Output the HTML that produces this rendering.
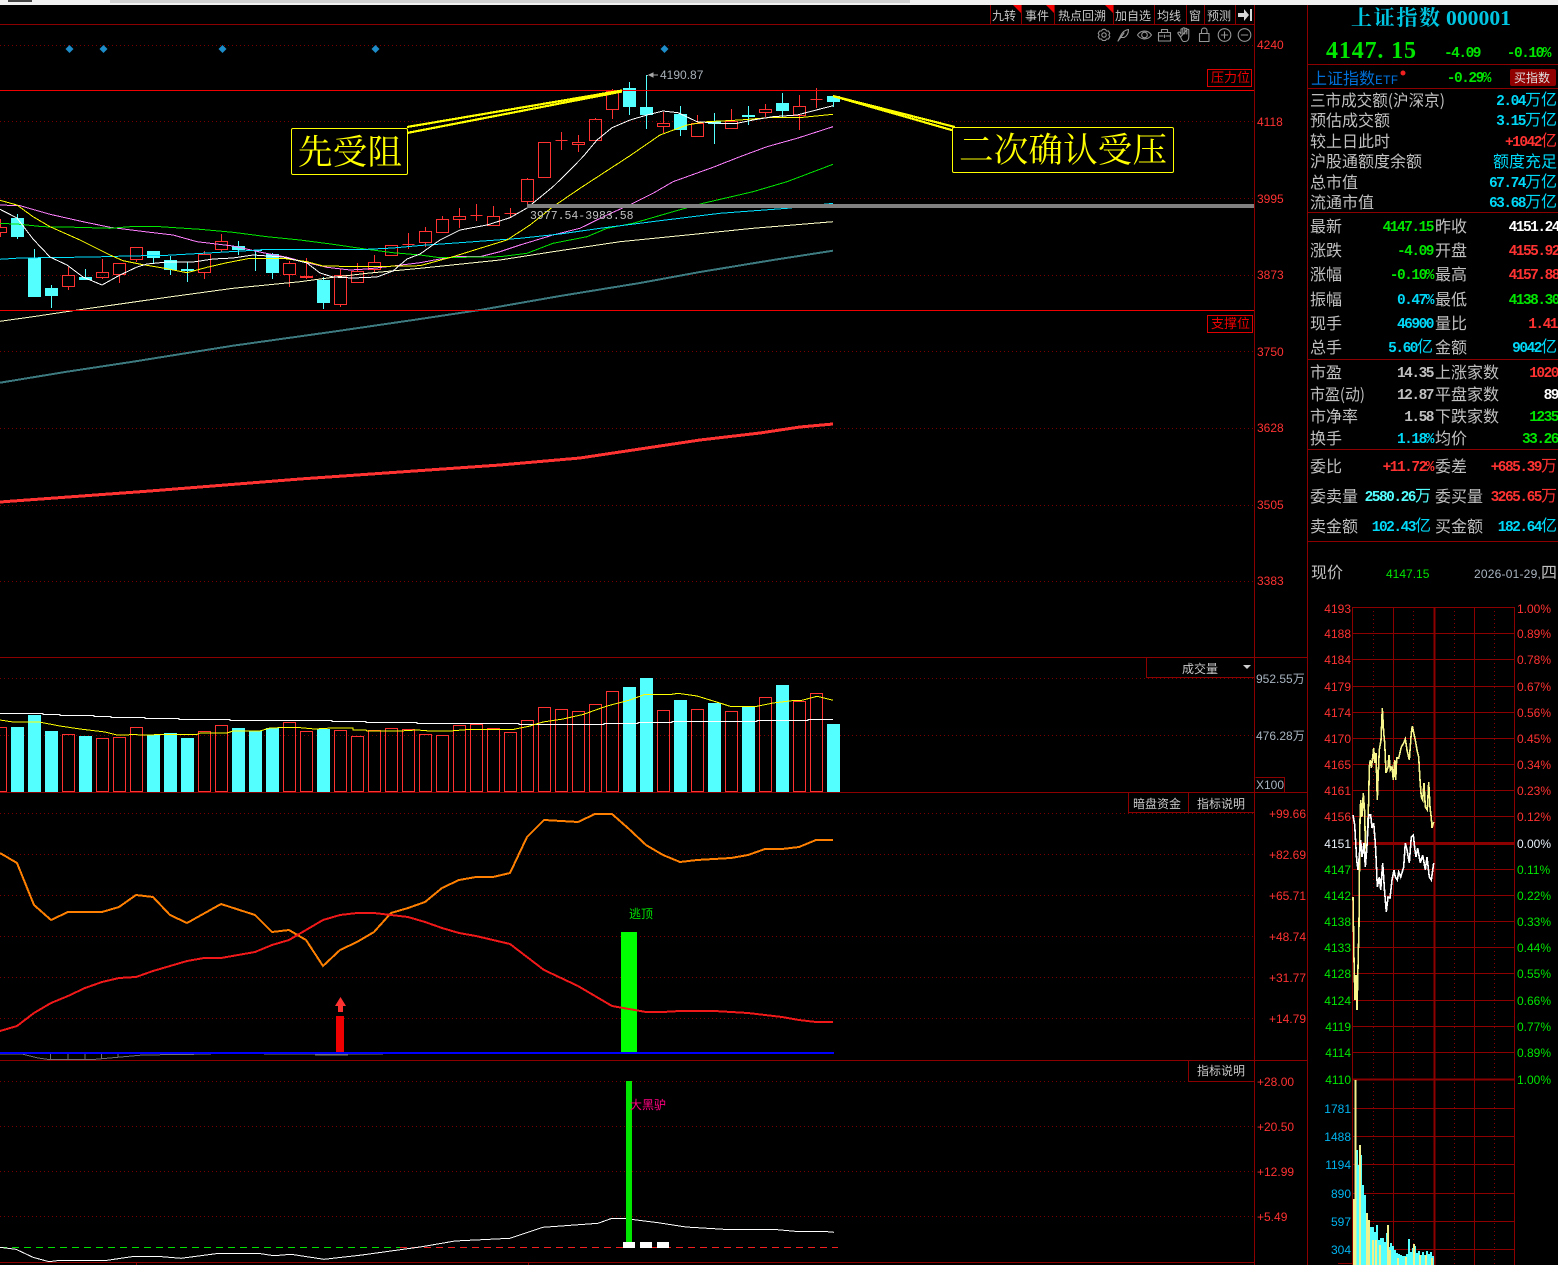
<!DOCTYPE html>
<html lang="zh-CN"><head><meta charset="utf-8"><title>上证指数 000001</title>
<style>
html,body{margin:0;padding:0;background:#000;width:1558px;height:1265px;overflow:hidden}
svg{display:block;position:absolute;left:0;top:0}
text{white-space:pre}
polyline{shape-rendering:crispEdges}
.cj{font-family:"WenQuanYi Zen Hei","Noto Sans CJK SC",sans-serif;font-size:16px;font-weight:400;letter-spacing:0}
.cs{font-family:"WenQuanYi Zen Hei","Noto Sans CJK SC",sans-serif;font-size:12px}
.l{font-family:"WenQuanYi Zen Hei","Noto Sans CJK SC",sans-serif;font-size:16px;fill:#c0c0c0}
.v{font-family:"Liberation Mono","WenQuanYi Zen Hei",monospace;font-weight:700;font-size:14.5px;letter-spacing:-1.5px;text-anchor:end}
.a{font-family:"Liberation Sans",sans-serif;font-size:12px}
.r{fill:#ff3232}.g{fill:#00e600}.c{fill:#00d8f8}.w{fill:#fff}.s{fill:#c0c0c0}.k{fill:#54ffff}
.e{text-anchor:end}
</style></head><body>
<svg width="1558" height="1265" viewBox="0 0 1558 1265" xmlns="http://www.w3.org/2000/svg">
<rect width="1558" height="1265" fill="#000"/>
<rect width="1558" height="5" fill="#f0f0f0"/><rect x="110" width="800" height="3" fill="#d0d0d0"/><rect x="8" width="24" height="2" fill="#444"/>

<!-- dotted grids -->
<g stroke="#7a0000" stroke-dasharray="1 3" fill="none" shape-rendering="crispEdges">
<path d="M0 45.5H1254M0 121.5H1254M0 198.5H1254M0 275.5H1254M0 351.5H1254M0 428.5H1254M0 505.5H1254M0 581.5H1254M0 678.5H1254M0 735.5H1254M0 813.5H1254M0 854.5H1254M0 895.5H1254M0 936.5H1254M0 977.5H1254M0 1018.5H1254M0 1081.5H1254M0 1126.5H1254M0 1171.5H1254M0 1216.5H1254"/>
</g>
<!-- frame -->
<g stroke="#8c0000" fill="none" shape-rendering="crispEdges">
<path d="M0 24.5H1254M0 657.5H1307M0 792.5H1307M0 1060.5H1307M0 1262.5H1254M1254.5 5V1265M1307.5 5V1265M136.5 1262V1265M528.5 1262V1265"/>
<path d="M990.5 5V24M1021.5 5V24M1054.5 5V24M1113.5 5V24M1154.5 5V24M1186.5 5V24M1204.5 5V24M1235.5 5V24"/>
<path d="M1146.5 657V677.5H1254M1128.5 792V812.5H1254M1188.5 792V812.5M1188.5 1060V1081.5H1254M1255.5 777.5H1284.5V792"/>
<path d="M1307 64.5H1558M1307 88.5H1558M1307 212.5H1558M1307 359.5H1558M1307 449.5H1558M1307 541.5H1558"/>
</g>
<path d="M1013 5H1021V13ZM1046 5H1054V13ZM1105 5H1113V13Z" fill="#f00000"/>
<g fill="#c8c8c8" class="cs">
<text x="992" y="20">九转</text><text x="1025" y="20">事件</text><text x="1058" y="20">热点回溯</text><text x="1115" y="20">加自选</text><text x="1157" y="20">均线</text><text x="1189" y="20">窗</text><text x="1207" y="20">预测</text>
<text x="1182" y="673">成交量</text><text x="1133" y="808">暗盘资金</text><text x="1197" y="808">指标说明</text><text x="1197" y="1075">指标说明</text>
</g>
<path d="M1238 13H1244V9L1249 15L1244 21V17H1238ZM1250 9H1252V21H1250Z" fill="#d8d8d8"/>
<path d="M1243 665H1251L1247 669Z" fill="#d0d0d0"/>

<!-- toolbar icons -->
<g fill="none" stroke="#969696" stroke-width="1.1" stroke-linejoin="round" stroke-linecap="round">
<path d="M1102.500 29.500L1104 29.200L1105.500 29.500L1106.500 31L1108.500 31L1109.800 33.500L1108.800 35L1109.800 36.500L1108.500 39L1106.500 39L1105.500 40.500H1102.500L1101.500 39L1099.500 39L1098.200 36.500L1099.200 35L1098.200 33.500L1099.500 31L1101.500 31Z"/><circle cx="1104" cy="35" r="2.200"/>
<path d="M1118 41L1121 35C1122.500 32 1125 30 1128.500 29.500C1128.500 33 1127 36 1124 37.500L1120.500 37.500M1118 41L1124 33"/>
<path d="M1137.500 35C1141 29.800 1148 29.800 1151.500 35C1148 40.200 1141 40.200 1137.500 35Z"/><circle cx="1144.500" cy="35" r="2.800"/>
<path d="M1158.500 32.500H1170.500V41H1158.500ZM1161.500 32.500V29.500H1167.500V32.500M1158.500 36H1163M1166 36H1170.500M1164.500 35V37.500"/>
<path d="M1180.500 37L1178 33.500C1177.500 32.500 1179 31.500 1180 32.500L1181 34V29.500C1181 28.500 1182.800 28.500 1182.800 29.500V28.500C1182.800 27.500 1184.800 27.500 1184.800 28.500V34M1184.800 29C1184.800 28 1186.800 28 1186.800 29V34M1186.800 30C1186.800 29 1188.800 29 1188.800 30V37C1188.800 39.500 1187.500 41.500 1185 41.500H1183.500C1182 41.500 1181.500 39 1180.500 37ZM1182.800 29V34"/>
<path d="M1199.500 33.500H1209V41.500H1199.500ZM1201.500 33.500V30.500C1201.500 27.200 1207 27.200 1207 30.500V33.500"/>
<circle cx="1224.500" cy="35" r="6.300"/><path d="M1221.300 35H1227.700M1224.500 31.800V38.200"/>
<circle cx="1244.500" cy="35" r="6.300"/><path d="M1241.300 35H1247.700"/>
</g>

<!-- diamonds -->
<path d="M69.500 45L73.500 49L69.500 53L65.500 49ZM103.500 45L107.500 49L103.500 53L99.500 49ZM222.500 45L226.500 49L222.500 53L218.500 49ZM375.500 45L379.500 49L375.500 53L371.500 49ZM664.500 45L668.500 49L664.500 53L660.500 49Z" fill="#1e8cc8"/>

<!-- cyan candles -->
<g shape-rendering="crispEdges">
<path fill="none" stroke="#54ffff" d="M17.500 214V239M34.500 249V297M51.500 285V308M85.500 269V280M153.500 251V263M170.500 256V275M187.500 262V282M238.500 241V255M255.500 250V271M272.500 253V279M323.500 277V309M629.500 82V115M646.500 75V129M680.500 106V136M714.500 113V144M748.500 106V125M782.500 93V117M833.500 95V107"/>
<path fill="#54ffff" d="M11 218h13v19H11ZM28 258h13v39H28ZM45 288h13v8H45ZM79 277h13v3H79ZM147 251h13v7H147ZM164 260h13v10H164ZM181 269h13v2H181ZM232 246h13v4H232ZM249 250h13v1H249ZM266 254h13v19H266ZM317 280h13v23H317ZM623 88h13v19H623ZM640 107h13v8H640ZM674 114h13v16H674ZM708 121h13v3H708ZM742 115h13v2H742ZM776 103h13v8H776ZM827 96h13v6H827Z"/>
<!-- red candles -->
<path fill="none" stroke="#ff3232" d="
M.5 219V227M.5 233V237M-5.500 227.500H6.500V232.500H-5.500Z
M68.500 267V275M68.500 287V290M62.500 275.500H74.500V286.500H62.500Z
M102.500 259V272M102.500 278V279M96.500 272.500H108.500V277.500H96.500Z
M119.500 275V283M113.500 263.500H125.500V274.500H113.500Z
M136.500 260V262M130.500 247.500H142.500V259.500H130.500Z
M204.500 251V254M204.500 273V279M198.500 254.500H210.500V272.500H198.500Z
M221.500 234V241M221.500 250V252M215.500 241.500H227.500V249.500H215.500Z
M289.500 261V263M289.500 275V287M283.500 263.500H295.500V274.500H283.500Z
M306.500 258V276M306.500 278V279M300.500 276.500H312.500V277.500H300.500Z
M340.500 269V275M340.500 305V307M334.500 275.500H346.500V304.500H334.500Z
M357.500 263V271M351.500 271.500H363.500V282.500H351.500Z
M374.500 255V262M374.500 270V273M368.500 262.500H380.500V269.500H368.500Z
M391.500 245V245M385.500 245.500H397.500V255.500H385.500Z
M408.500 233V249M402.500 244.500H414.500
M425.500 227V231M425.500 243V247M419.500 231.500H431.500V242.500H419.500Z
M442.500 216V219M436.500 219.500H448.500V232.500H436.500Z
M459.500 208V216M459.500 220V228M453.500 216.500H465.500V219.500H453.500Z
M476.500 204V221M470.500 215.500H482.500
M493.500 206V216M487.500 216.500H499.500V225.500H487.500Z
M510.500 208V217M504.500 213.500H516.500
M527.500 178V179M527.500 202V208M521.500 179.500H533.500V201.500H521.500Z
M538.500 142.500H550.500V177.500H538.500Z
M561.500 132V150M555.500 140.500H567.500
M578.500 135V142M578.500 145V152M572.500 142.500H584.500V144.500H572.500Z
M595.500 118V119M589.500 119.500H601.500V140.500H589.500Z
M612.500 89V91M612.500 110V119M606.500 91.500H618.500V109.500H606.500Z
M663.500 112V123M663.500 127V133M657.500 123.500H669.500V126.500H657.500Z
M697.500 115V123M691.500 123.500H703.500V136.500H691.500Z
M731.500 109V121M725.500 121.500H737.500V128.500H725.500Z
M765.500 104V109M765.500 113V117M759.500 109.500H771.500V112.500H759.500Z
M799.500 95V106M799.500 116V130M793.500 106.500H805.500V115.500H793.500Z
M816.500 88V108M810.500 99.500H822.500"/>
</g>

<!-- MAs -->
<g fill="none" stroke-width="1">
<polyline stroke="#ff80ff" points="0,205 20,205.700 50,214.300 83,221.700 110,227.300 150,232.300 173,235 197,241.700 233,246 263,252.700 287,257.300 307,262.700 327,267.300 350,270 367,269 393,266 420,262.700 440,259 457,256.700 480,256.700 500,251.700 520,245 553,235 580,228.300 607,215 633,203.300 653,193.300 673,181.700 713,167.300 740,156.700 767,146.700 797,138.300 833,126.700"/>
<polyline stroke="#00e600" points="0,223.300 20,224.300 43,226.700 77,227.300 110,228.300 130,226.700 160,226.700 200,229.300 233,232.300 267,236.700 300,240 333,244.300 367,249.300 393,252.700 420,255 440,257.700 500,256.700 527,253.300 553,243.300 587,236.700 607,228.300 633,223.300 673,211.700 703,203.300 753,191.700 787,181.700 833,164.300"/>
<polyline stroke="#00e0ff" points="0,259.300 20,258 93,257 127,256 167,255.300 213,252.700 247,250.700 267,249.300 367,249.300 393,248 420,245.500 460,242.700 520,238.300 560,234 600,228.300 660,220.700 720,213.300 787,208.300 833,203.300"/>
<polyline stroke="#ffffc8" points="0,321.300 33,316.700 73,310.700 113,305 167,297.300 233,288.300 300,281.700 333,277.300 367,273.300 420,268.300 500,260 553,251.700 620,241.700 687,235 753,228.300 833,221.700"/>
<polyline stroke="#ffff00" points="0,200.300 17,205 33,216.700 50,226.700 80,240 110,255 123,260.700 143,264.700 163,268 187,272.700 207,267.300 227,262.700 250,258.300 283,258.300 307,261.700 323,266 367,266.700 420,265.700 453,256.700 480,248.300 507,240 530,225 553,206.700 580,188.300 603,173.300 630,155.700 660,135 687,125 707,121.700 740,120 773,117.300 803,117.300 833,114.300"/>
<polyline stroke="#fff" points="0,209.300 17,218 33,239 50,257 67,265 83,277 102,285 120,275 137,267 147,264 167,262 193,262 213,259 233,258 253,255 283,257 307,263 320,273 333,277 353,278 377,277 393,271 407,259 420,254 440,240 460,230 487,225 510,217.700 527,208 553,186.700 567,173 583,156.700 597,140 612,127.700 630,120 647,115 663,111 678,112.700 697,121.700 720,123.300 737,123.300 753,120 773,116.700 797,115 833,105.700"/>
<polyline stroke="#3c7a80" stroke-width="2" points="0,382.700 67,371.700 133,361.700 233,345.700 333,331.700 420,319 480,310 560,296 640,283 700,272 773,260 833,250.700"/>
<polyline stroke="#ff3232" stroke-width="3" points="0,502 150,491 300,479 400,472 500,465 580,458 640,449 700,440 760,433 800,427 833,424"/>
</g>

<rect x="527" y="204" width="727" height="4" fill="#808080"/>
<path d="M0 90.500H1254M0 310.500H1254" stroke="#f00000" fill="none" shape-rendering="crispEdges"/>

<!-- annotation lines -->
<g stroke="#ffff00" stroke-width="2.200" fill="none" shape-rendering="crispEdges">
<path d="M407 127L622 90.500M407 133L622 91.500M833 96L955 127M833 96L955 131"/>
</g>
<rect x="291.500" y="128.500" width="116" height="46" rx="1.500" fill="#000" stroke="#ffff00"/>
<rect x="952.500" y="127.500" width="221" height="45" rx="1.500" fill="#000" stroke="#ffff00"/>
<g fill="#ffff00" font-family="'Noto Serif CJK SC',serif" font-size="34.500px">
<text x="298" y="164" textLength="104" lengthAdjust="spacing">先受阻</text>
<text x="959" y="162" textLength="208" lengthAdjust="spacing">二次确认受压</text>
</g>

<path d="M649 75H658M649 75L653 73V77Z M647.500 75V76" stroke="#a8a8a8" fill="#a8a8a8" />
<text class="a" x="660" y="79" fill="#a8b0b8">4190.87</text>
<text x="530" y="219" fill="#c0c0c0" font-family="'Liberation Mono',monospace" font-size="11.500px">3977.54-3983.58</text>

<rect x="1207.500" y="69.500" width="44" height="17" fill="none" stroke="#e00000"/>
<rect x="1207.500" y="315.500" width="45" height="17" fill="none" stroke="#e00000"/>
<g class="cs" fill="#f00000" font-size="13"><text x="1211" y="82" font-size="13">压力位</text><text x="1211" y="328" font-size="13">支撑位</text></g>

<!-- axis main -->
<g class="a r">
<text x="1257" y="49">4240</text><text x="1257" y="126">4118</text><text x="1257" y="203">3995</text><text x="1257" y="279">3873</text><text x="1257" y="356">3750</text><text x="1257" y="432">3628</text><text x="1257" y="509">3505</text><text x="1257" y="585">3383</text>
</g>
<g class="a" fill="#a8b4c0"><text x="1256" y="683">952.55<tspan class="cs">万</tspan></text><text x="1256" y="740">476.28<tspan class="cs">万</tspan></text><text x="1256" y="789">X100</text></g>
<g class="a r e">
<text x="1306" y="818">+99.66</text><text x="1306" y="859">+82.69</text><text x="1306" y="900">+65.71</text><text x="1306" y="941">+48.74</text><text x="1306" y="982">+31.77</text><text x="1306" y="1023">+14.79</text>
</g>
<g class="a r">
<text x="1257" y="1086">+28.00</text><text x="1257" y="1131">+20.50</text><text x="1257" y="1176">+12.99</text><text x="1257" y="1221">+5.49</text>
</g>

<!-- volume -->
<g shape-rendering="crispEdges">
<path fill="#54ffff" d="M11 727h13V792H11ZM28 715h13V792H28ZM45 731h13V792H45ZM79 736h13V792H79ZM147 735h13V792H147ZM164 733h13V792H164ZM181 738h13V792H181ZM232 728h13V792H232ZM249 731h13V792H249ZM266 728h13V792H266ZM317 729h13V792H317ZM623 687h13V792H623ZM640 678h13V792H640ZM674 700h13V792H674ZM708 703h13V792H708ZM742 706h13V792H742ZM776 685h13V792H776ZM827 724h13V792H827Z"/>
<path fill="none" stroke="#ff3232" d="M-5.500 727.500h12V791.500h-12ZM62.500 734.500h12V791.500h-12ZM96.500 738.500h12V791.500h-12ZM113.500 737.500h12V791.500h-12ZM130.500 727.500h12V791.500h-12ZM198.500 731.500h12V791.500h-12ZM215.500 725.500h12V791.500h-12ZM283.500 722.500h12V791.500h-12ZM300.500 731.500h12V791.500h-12ZM334.500 730.500h12V791.500h-12ZM351.500 736.500h12V791.500h-12ZM368.500 730.500h12V791.500h-12ZM385.500 728.500h12V791.500h-12ZM402.500 729.500h12V791.500h-12ZM419.500 734.500h12V791.500h-12ZM436.500 735.500h12V791.500h-12ZM453.500 725.500h12V791.500h-12ZM470.500 724.500h12V791.500h-12ZM487.500 728.500h12V791.500h-12ZM504.500 732.500h12V791.500h-12ZM521.500 720.500h12V791.500h-12ZM538.500 707.500h12V791.500h-12ZM555.500 709.500h12V791.500h-12ZM572.500 711.500h12V791.500h-12ZM589.500 704.500h12V791.500h-12ZM606.500 691.500h12V791.500h-12ZM657.500 710.500h12V791.500h-12ZM691.500 709.500h12V791.500h-12ZM725.500 711.500h12V791.500h-12ZM759.500 697.500h12V791.500h-12ZM793.500 701.500h12V791.500h-12ZM810.500 693.500h12V791.500h-12Z"/>
<path fill="none" stroke="#fff" d="M0 713.500H43V714.500H60V715.500H94V716.500H111V717.500H145V718.500H179V719.500H230V720.500H332V721.500H366V722.500H417V723.500H519V724.500H604V723.500H638V722.500H672V721.500H757V720.500H808V719.500H833"/>
</g>
<polyline fill="none" stroke="#ffff00" points="0,720 13,722 39,722 60,726 80,729 105,732 117,735 128,735 130,734.500 145,735 163,734.500 197,734.500 200,733 227,733 233,731 260,731 270,728 285,727.500 298,727.500 315,729 332,728 353,728 353,730 366,730 367,731 400,731 417,730 430,731 450,731 468,729.500 513,729.500 530,726 543,722 563,719 583,714.500 607,706 630,700 645,694.300 672,694.300 678,693.300 697,696 723,704 730,706.300 757,706.300 773,703 792,700.700 802,700.300 817,696.300 833,700.300"/>

<!-- indicator 1 -->
<polyline fill="none" stroke="#ff8000" stroke-width="2" points="0,853 17,863 34,905 51,920 68,912 102,912 119,907 136,895 153,897 170,915 187,923 221,904 255,915 272,932 289,930 306,940 323,966 340,950 357,942 374,932 391,913 408,908 425,902 442,888 459,880 476,877 493,877 510,873 527,837 544,820 561,821 578,822 595,814 612,814 629,829 646,845 663,855 680,862 697,860 714,859 731,858 748,855 765,849 782,849 799,847 816,840 833,840"/>
<rect x="621" y="932" width="16" height="120" fill="#00ff00"/>
<rect x="336" y="1016" width="8" height="36" fill="#f00000"/>
<path d="M340.500 997L346 1006H343V1012H338V1006H335Z" fill="#ff3232"/>
<polyline fill="none" stroke="#f01818" stroke-width="2" points="0,1031 17,1026 34,1013 51,1003 68,996 85,988 102,982 119,978 136,977 153,971 170,966 187,961 204,958 221,958 238,955 255,952 272,945 289,940 306,930 323,920 340,915 357,913 374,913 391,915 408,917 425,922 442,928 459,933 476,936 493,940 510,944 527,957 544,970 561,978 578,986 595,996 612,1006 629,1009 646,1012 663,1012 680,1011 697,1011 714,1011 731,1012 748,1013 765,1015 782,1017 799,1020 816,1022 833,1022"/>
<text class="cs" x="629" y="918" fill="#00e000">逃顶</text>
<path d="M0 1054H22L38 1058L49 1059.500H93L110 1058L143 1055L211 1054M264 1054H383M315 1055H348M50.500 1054V1059M68 1054V1059M85 1054V1059M101.500 1054V1059M118 1054V1057" stroke="#707070" fill="none" shape-rendering="crispEdges"/>
<rect x="0" y="1052" width="834" height="2" fill="#0000ff"/>

<!-- indicator 2 -->
<path d="M0 1247.500H400" stroke="#00e000" stroke-dasharray="7 5" fill="none" shape-rendering="crispEdges"/>
<path d="M400 1247.500H838" stroke="#f02020" stroke-dasharray="7 5" fill="none" shape-rendering="crispEdges"/>
<polyline fill="none" stroke="#fff" points="0,1247.300 16,1249.300 33,1257.300 49,1261.700 60,1260.300 107,1260.300 132,1256.700 162,1256.700 181,1258.300 219,1253.300 258,1253.300 274,1255.700 291,1254.300 324,1259.300 362,1255 422,1246.700 455,1241 510,1238.300 543,1227.300 598,1223.300 612,1218.300 623,1218.300 658,1222.700 686,1227 724,1229.300 773,1229.300 795,1231.300 823,1231.300 834,1232.300"/>
<rect x="626" y="1081" width="6" height="161" fill="#00e600"/>
<rect x="623" y="1242" width="12" height="6" fill="#fff"/><rect x="640" y="1242" width="12" height="6" fill="#fff"/><rect x="657" y="1242" width="12" height="6" fill="#fff"/>
<text class="cs" x="630" y="1109" fill="#ff0080" font-size="13">大黑驴</text>

<!-- right panel header -->
<text x="1351" y="25" fill="#00c4e0" font-family="'Noto Serif CJK SC',serif" font-weight="700" font-size="21px" textLength="89">上证指数</text>
<text x="1446" y="25" fill="#00c4e0" font-family="'Liberation Serif',serif" font-weight="700" font-size="21px" textLength="65" lengthAdjust="spacingAndGlyphs">000001</text>
<text x="1326" y="58" class="g" font-family="'Liberation Serif',serif" font-weight="700" font-size="24px" textLength="90">4147. 15</text>
<text class="v g" x="1480" y="57">-4.09</text><text class="v g" x="1550" y="57">-0.10%</text>
<text x="1311" y="84" class="l" style="fill:#0070d8">上证指数<tspan font-family="'Liberation Mono',monospace" font-size="13">ETF</tspan></text>
<circle cx="1403" cy="73" r="2.500" fill="#f02020"/>
<text class="v g" x="1490" y="82">-0.29%</text>
<rect x="1510" y="69" width="46" height="17" rx="2" fill="#900000"/>
<text class="cs" x="1514" y="82" fill="#e0e0e0" font-size="13">买指数</text>

<g>
<text class="l" x="1310" y="106" textLength="135" lengthAdjust="spacingAndGlyphs">三市成交额(沪深京)</text><text class="v c" x="1557" y="105">2.04<tspan class="cj">万亿</tspan></text>
<text class="l" x="1310" y="126">预估成交额</text><text class="v c" x="1557" y="125">3.15<tspan class="cj">万亿</tspan></text>
<text class="l" x="1310" y="147">较上日此时</text><text class="v r" x="1557" y="146">+1042<tspan class="cj">亿</tspan></text>
<text class="l" x="1310" y="167">沪股通额度余额</text><text class="cj c e" x="1557" y="167">额度充足</text>
<text class="l" x="1310" y="188">总市值</text><text class="v c" x="1557" y="187">67.74<tspan class="cj">万亿</tspan></text>
<text class="l" x="1310" y="208">流通市值</text><text class="v c" x="1557" y="207">63.68<tspan class="cj">万亿</tspan></text>

<text class="l" x="1310" y="232">最新</text><text class="v g" x="1433" y="231">4147.15</text><text class="l" x="1435" y="232">昨收</text><text class="v w" x="1559" y="231">4151.24</text>
<text class="l" x="1310" y="256">涨跌</text><text class="v g" x="1433" y="255">-4.09</text><text class="l" x="1435" y="256">开盘</text><text class="v r" x="1559" y="255">4155.92</text>
<text class="l" x="1310" y="280">涨幅</text><text class="v g" x="1433" y="279">-0.10%</text><text class="l" x="1435" y="280">最高</text><text class="v r" x="1559" y="279">4157.88</text>
<text class="l" x="1310" y="305">振幅</text><text class="v c" x="1433" y="304">0.47%</text><text class="l" x="1435" y="305">最低</text><text class="v g" x="1559" y="304">4138.30</text>
<text class="l" x="1310" y="329">现手</text><text class="v c" x="1433" y="328">46900</text><text class="l" x="1435" y="329">量比</text><text class="v r" x="1557" y="328">1.41</text>
<text class="l" x="1310" y="353">总手</text><text class="v c" x="1433" y="352">5.60<tspan class="cj">亿</tspan></text><text class="l" x="1435" y="353">金额</text><text class="v c" x="1557" y="352">9042<tspan class="cj">亿</tspan></text>

<text class="l" x="1310" y="378">市盈</text><text class="v s" x="1433" y="377">14.35</text><text class="l" x="1435" y="378">上涨家数</text><text class="v r" x="1558" y="377">1020</text>
<text class="l" x="1310" y="400" textLength="55" lengthAdjust="spacingAndGlyphs">市盈(动)</text><text class="v s" x="1433" y="399">12.87</text><text class="l" x="1435" y="400">平盘家数</text><text class="v w" x="1558" y="399">89</text>
<text class="l" x="1310" y="422">市净率</text><text class="v s" x="1433" y="421">1.58</text><text class="l" x="1435" y="422">下跌家数</text><text class="v g" x="1558" y="421">1235</text>
<text class="l" x="1310" y="444">换手</text><text class="v c" x="1433" y="443">1.18%</text><text class="l" x="1435" y="444">均价</text><text class="v g" x="1558" y="443">33.26</text>

<text class="l" x="1310" y="472">委比</text><text class="v r" x="1433" y="471">+11.72%</text><text class="l" x="1435" y="472">委差</text><text class="v r" x="1557" y="471">+685.39<tspan class="cj">万</tspan></text>
<text class="l" x="1310" y="502">委卖量</text><text class="v k" x="1431" y="501">2580.26<tspan class="cj">万</tspan></text><text class="l" x="1435" y="502">委买量</text><text class="v r" x="1557" y="501">3265.65<tspan class="cj">万</tspan></text>
<text class="l" x="1310" y="532">卖金额</text><text class="v c" x="1431" y="531">102.43<tspan class="cj">亿</tspan></text><text class="l" x="1435" y="532">买金额</text><text class="v c" x="1557" y="531">182.64<tspan class="cj">亿</tspan></text>

<text class="l" x="1311" y="578">现价</text><text class="a g" x="1386" y="578">4147.15</text><text class="a" x="1474" y="578" fill="#a8b4c0" textLength="83">2026-01-29,<tspan class="cj" fill="#c0c0c0">四</tspan></text>
</g>

<!-- intraday grid -->
<g stroke="#8c0000" fill="none" shape-rendering="crispEdges">
<path d="M1352 607.500H1515M1352 633.500H1515M1352 659.500H1515M1352 686.500H1515M1352 712.500H1515M1352 738.500H1515M1352 764.500H1515M1352 790.500H1515M1352 816.500H1515M1352 869.500H1515M1352 895.500H1515M1352 921.500H1515M1352 947.500H1515M1352 973.500H1515M1352 1000.500H1515M1352 1026.500H1515M1352 1052.500H1515M1352 1108.500H1515M1352 1136.500H1515M1352 1164.500H1515M1352 1193.500H1515M1352 1221.500H1515M1352 1249.500H1515"/>
<path d="M1352.500 607V1265M1393.500 607V1265M1474.500 607V1265M1514.500 607V1265M1338 1263.500H1352"/>
<path d="M1373.500 607V1265M1413.500 607V1265M1454.500 607V1265M1494.500 607V1265" stroke-dasharray="1 3"/>
<path d="M1352 843.500H1515" stroke-width="3"/>
<path d="M1352 1079.500H1515" stroke-width="2"/>
<path d="M1434.500 607V1265" stroke-width="2"/>
</g>

<!-- intraday volume -->
<g fill="none" stroke-width="2" shape-rendering="crispEdges">
<path stroke="#54ffff" d="M1357 1150V1265M1359 1165V1265M1361 1155V1265M1363 1185V1265M1365 1195V1265M1371 1227V1265M1373 1227V1265M1375 1232V1265M1377 1225V1265M1379 1240V1265M1381 1238V1265M1383 1238V1265M1385 1242V1265M1387 1233V1265M1389 1247V1265M1391 1243V1265M1393 1246V1265M1395 1250V1265M1397 1253V1265M1399 1254V1265M1401 1255V1265M1403 1256V1265M1405 1256V1265M1407 1254V1265M1409 1239V1265M1411 1252V1265M1413 1248V1265M1415 1246V1265M1417 1253V1265M1419 1251V1265M1421 1255V1265M1423 1252V1265M1425 1255V1265M1427 1251V1265M1429 1254V1265M1431 1252V1265M1433 1256V1265"/>
<path stroke="#f0f08c" d="M1354 1199V1265M1355.500 1080V1265M1360 1145V1265M1367 1213V1265M1369 1220V1265M1373 1240V1265M1376 1240V1265M1380 1245V1265M1388 1225V1265M1390 1250V1265M1398 1258V1265M1406 1257V1265M1414 1244V1265M1420 1255V1265M1426 1255V1265M1432 1258V1265"/>
</g>

<!-- intraday lines -->
<polyline fill="none" stroke="#f6f68c" stroke-width="1.600" points="1353,897 1354,960 1355,1000 1356,975 1357,1010 1358,967 1359,925 1359.300,886.700 1360,820 1360.700,800 1362,816.700 1363.300,793 1364.700,813 1365.300,843 1366.700,853 1367.700,827 1368.700,800 1369.300,767 1370.300,760 1371.300,768 1372.700,757 1373.700,748 1374.700,763 1376,753 1377.300,800 1378,780 1379.300,750 1381,740 1382.300,708 1383.700,733 1384.700,743 1386,773 1388,767 1389,755 1390.300,770 1392,767 1393.300,780 1394.700,760 1395.700,780 1396.700,758 1398.700,758 1401.300,747 1403.700,743 1405.300,739 1407,750 1409.300,760 1411.300,733 1412.300,726 1413.700,733 1415.300,740 1417,750 1418.700,757 1420,780 1421.300,797 1422.700,800 1424,783 1425.300,807 1427.300,810 1428.700,782 1430,807 1431.300,818 1432,828 1433.700,822"/>
<polyline fill="none" stroke="#fff" stroke-width="1.600" points="1353,815 1354.700,825 1356.700,860 1358,870 1360.700,840 1362,857 1364,843 1365.300,867 1366.700,850 1368.700,815 1370.700,815 1372,828 1373.700,823 1375.300,843 1376.300,863 1377.300,887 1379.300,877 1380.700,890 1382.700,863 1384.700,893 1386.300,912 1388,897 1390,898 1392,880 1394,870 1395.300,877 1397.300,880 1398.700,872 1400.700,877 1403.700,867 1405.300,843 1407,850 1409.300,863 1411.300,837 1413.300,835 1414.700,848 1416,857 1417.700,848 1420.300,863 1422.700,855 1425.300,870 1427,857 1429.300,877 1431.300,880 1433.700,863"/>

<!-- intraday labels -->
<g class="a e">
<g class="r"><text x="1351" y="613">4193</text><text x="1351" y="638">4188</text><text x="1351" y="664">4184</text><text x="1351" y="691">4179</text><text x="1351" y="717">4174</text><text x="1351" y="743">4170</text><text x="1351" y="769">4165</text><text x="1351" y="795">4161</text><text x="1351" y="821">4156</text></g>
<text x="1351" y="848" fill="#e8f0f8">4151</text>
<g class="g"><text x="1351" y="874">4147</text><text x="1351" y="900">4142</text><text x="1351" y="926">4138</text><text x="1351" y="952">4133</text><text x="1351" y="978">4128</text><text x="1351" y="1005">4124</text><text x="1351" y="1031">4119</text><text x="1351" y="1057">4114</text><text x="1351" y="1084">4110</text></g>
<g fill="#00b4f0"><text x="1351" y="1113">1781</text><text x="1351" y="1141">1488</text><text x="1351" y="1169">1194</text><text x="1351" y="1198">890</text><text x="1351" y="1226">597</text><text x="1351" y="1254">304</text></g>
</g>
<g class="a">
<g class="r"><text x="1517" y="613">1.00%</text><text x="1517" y="638">0.89%</text><text x="1517" y="664">0.78%</text><text x="1517" y="691">0.67%</text><text x="1517" y="717">0.56%</text><text x="1517" y="743">0.45%</text><text x="1517" y="769">0.34%</text><text x="1517" y="795">0.23%</text><text x="1517" y="821">0.12%</text></g>
<text x="1517" y="848" fill="#e8f0f8">0.00%</text>
<g class="g"><text x="1517" y="874">0.11%</text><text x="1517" y="900">0.22%</text><text x="1517" y="926">0.33%</text><text x="1517" y="952">0.44%</text><text x="1517" y="978">0.55%</text><text x="1517" y="1005">0.66%</text><text x="1517" y="1031">0.77%</text><text x="1517" y="1057">0.89%</text><text x="1517" y="1084">1.00%</text></g>
</g>
</svg>
</body></html>
